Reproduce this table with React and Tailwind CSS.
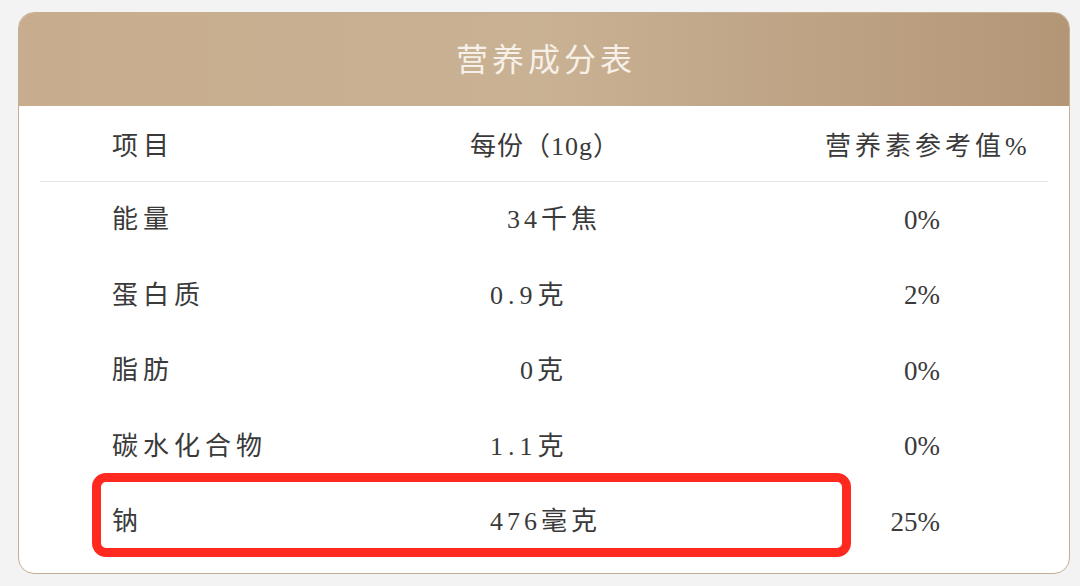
const rows = [
  { name: '能量', value: '34千焦', valueCls: 'pl-[17px] tracking-[4px]', pct: '0%' },
  { name: '蛋白质', value: '0.9克', valueCls: 'pl-0 tracking-[5px]', pct: '2%' },
  { name: '脂肪', value: '0克', valueCls: 'pl-[30px] tracking-[4px]', pct: '0%' },
  { name: '碳水化合物', value: '1.1克', valueCls: 'pl-0 tracking-[5px]', pct: '0%' },
  { name: '钠', value: '476毫克', valueCls: 'pl-0 tracking-[4px]', pct: '25%', marked: true },
];

const font = { fontFamily: '"Liberation Serif", "Noto Sans CJK SC", serif' };

export default function App() {
  return (
    <div className="w-[1080px] h-[586px] bg-[#f3f3f3] pt-[12px] pl-[18px]" style={font}>
      <div className="w-[1052px] h-[562px] bg-white rounded-[16px] border border-[#c4af94] overflow-hidden flex flex-col">
        <div className="h-[93px] shrink-0 flex items-center justify-center bg-gradient-to-r from-[#c7ad8d] via-[#c9b194] to-[#b39676]">
          <h1 className="text-[32px] tracking-[4px] text-[#f6f0e8] font-normal pl-[4px]">营养成分表</h1>
        </div>

        <div className="flex items-center h-[75px] pt-[6px] text-[26px] text-[#3a3a3a]">
          <div className="w-[451px] pl-[93px] tracking-[5px]">项目</div>
          <div className="w-[355px] tracking-[1px]">每份（10g）</div>
          <div className="tracking-[4px]">营养素参考值%</div>
        </div>
        <div className="mx-[21px] h-px bg-[#e6e4e2]" />

        {rows.map((r) => (
          <div key={r.name} className="relative flex items-center h-[75.5px] text-[26px] text-[#3a3a3a]">
            <div className="w-[471px] pl-[93px] tracking-[5px]">{r.name}</div>
            <div className={`w-[325px] ${r.valueCls}`}>{r.value}</div>
            <div className="w-[125px] text-right text-[27px]">{r.pct}</div>
            {r.marked && (
              <div className="absolute left-[73px] top-[-11px] w-[759px] h-[84px] border-[9px] border-[#ff2a1f] rounded-[14px]" />
            )}
          </div>
        ))}
      </div>
    </div>
  );
}
